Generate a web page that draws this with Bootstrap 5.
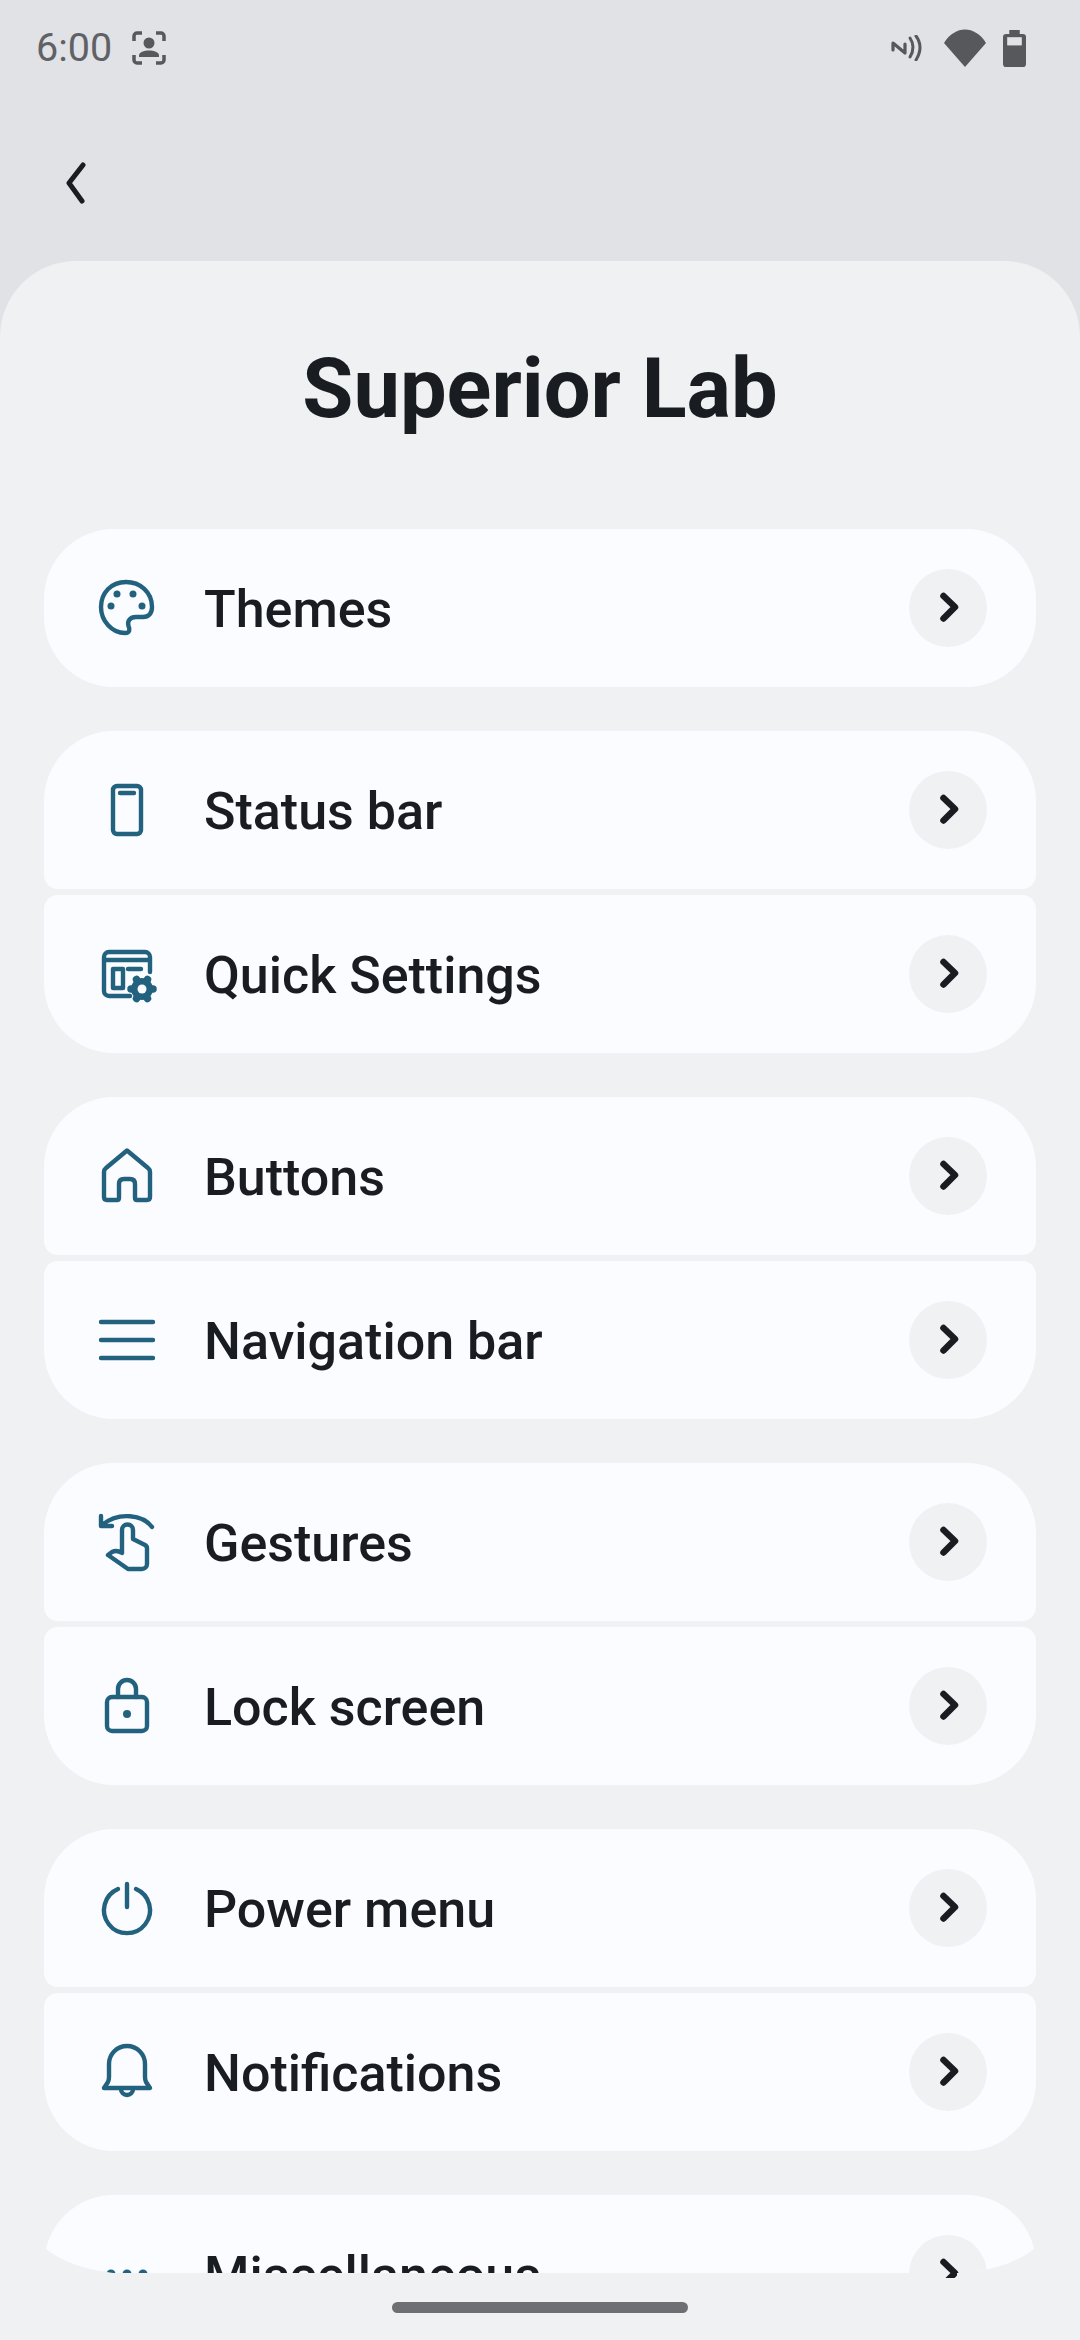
<!DOCTYPE html>
<html lang="en">
<head>
    <meta charset="UTF-8">
    <meta name="viewport" content="width=device-width, initial-scale=1">
    <title>Superior Lab</title>
    <link href="https://cdn.jsdelivr.net/npm/bootstrap@5.3.0/dist/css/bootstrap.min.css" rel="stylesheet">
    <style>
        body {
            width: 1080px;
            height: 2340px;
            overflow: hidden;
            background-color: #e0e2e6;
            font-family: Roboto, "Liberation Sans", sans-serif;
            color: #191c20;
        }
        .top-area { height: 261px; }
        .status-row { height: 96px; padding: 0 54px 0 36px; color: #57585b; }
        .status-time { font-size: 39.5px; line-height: 1; margin-right: 20px; color: #5f6165; }
        .status-icons { gap: 17px; }
        .back-row { padding: 66px 0 0 64px; }
        .sheet {
            height: 2079px;
            background-color: #f0f1f3;
            border-radius: 76px 76px 0 0;
        }
        .page-title {
            height: 268px;
            margin: 0;
            font-size: 83px;
            font-weight: 700;
            line-height: 256px;
            text-align: center;
            color: #191c20;
        }
        .group-list { margin: 0 44px; gap: 44px; }
        .row-group { gap: 6px; }
        .menu-row {
            height: 158px;
            padding: 0 49px 0 55px;
            background-color: #fbfcff;
            border-radius: 14px;
        }
        .row-group > .menu-row:first-child { border-top-left-radius: 70px; border-top-right-radius: 70px; }
        .row-group > .menu-row:last-child { border-bottom-left-radius: 70px; border-bottom-right-radius: 70px; }
        .row-icon { width: 56px; height: 56px; flex: none; overflow: visible; }
        .row-icon .ln { fill: none; stroke: #23627f; stroke-width: 4.4; stroke-linecap: round; stroke-linejoin: round; }
        .row-icon .tooth { fill: none; stroke: #23627f; stroke-width: 7.5; stroke-linecap: round; }
        .row-icon .fl { fill: #23627f; }
        .row-label { margin-left: 49px; padding-top: 3px; font-size: 52px; font-weight: 500; line-height: 1; }
        .go-btn {
            width: 78px;
            height: 78px;
            background-color: #f0f1f3;
            border-radius: 50%;
        }
        .cut-row {
            clip-path: path("M0 0H992V52Q970 72 923 78H913V83H893V78H69Q22 72 0 52Z");
        }
        .nav-handle {
            bottom: 27px;
            left: 392px;
            width: 296px;
            height: 11px;
            background-color: #6e6f73;
            border-radius: 6px;
        }
    </style>
</head>
<body class="position-relative">

<svg width="0" height="0" class="position-absolute">
    <symbol id="chev" viewBox="0 0 78 78">
        <path d="M34.500 27L46 38L34.500 49.500" fill="none" stroke="#191c20" stroke-width="6.500" stroke-linecap="round" stroke-linejoin="round"/>
    </symbol>
</svg>

<div class="top-area">
    <div class="status-row d-flex align-items-center justify-content-between">
        <div class="d-flex align-items-center">
            <span class="status-time">6:00</span>
            <svg width="34" height="34" viewBox="0 0 34 34" fill="none">
                <path d="M2 10V5a3 3 0 0 1 3-3H10M24 2H29a3 3 0 0 1 3 3V10M2 24V29a3 3 0 0 0 3 3H10M24 32H29a3 3 0 0 0 3-3V24" stroke="#57585b" stroke-width="3.500"/>
                <circle cx="17" cy="12" r="5.500" fill="#57585b"/>
                <path d="M7 26V24.500C7 21 12 19.500 17 19.500S27 21 27 24.500V26Z" fill="#57585b"/>
            </svg>
        </div>
        <div class="status-icons d-flex align-items-center">
            <svg class="me-1" width="32" height="26" viewBox="0 0 32 26" fill="none" stroke="#57585b" stroke-linecap="round">
                <path d="M2 15L2 8L14 18L14 9" stroke-width="3.200" stroke-linejoin="round"/>
                <path d="M19 3Q25 12 19 22" stroke-width="3"/>
                <path d="M25 1Q33 12 25 25" stroke-width="3"/>
            </svg>
            <svg width="42" height="38" viewBox="0 0 42 38">
                <path d="M0 14C11 -4 31 -4 42 14L21 38Z" fill="#57585b"/>
            </svg>
            <svg width="23" height="37" viewBox="0 0 22 36" preserveAspectRatio="none">
                <path d="M6 0H16V4H19a3 3 0 0 1 3 3V33a3 3 0 0 1-3 3H3a3 3 0 0 1-3-3V7a3 3 0 0 1 3-3H6Z" fill="#57585b"/>
                <rect x="4" y="7" width="14" height="8" fill="#e0e2e6"/>
            </svg>
        </div>
    </div>
    <div class="back-row">
        <svg width="24" height="42" viewBox="0 0 24 42">
            <path d="M19 3L5 21L18 39" fill="none" stroke="#191c20" stroke-width="5" stroke-linecap="round" stroke-linejoin="round"/>
        </svg>
    </div>
</div>

<div class="sheet overflow-hidden">
    <h1 class="page-title">Superior Lab</h1>
    <div class="group-list d-flex flex-column">

        <div class="row-group d-flex flex-column">
            <div class="menu-row d-flex align-items-center justify-content-between">
                <div class="d-flex align-items-center">
                    <svg class="row-icon" viewBox="0 0 56 56">
                        <path class="ln" d="M27 2C12 2 2 13 2 27C2 41 13 53 26 53C31 53 31 49 29.500 46C28 41 31 37 37 37H44C50 37 53 33 53 27C53 12 41 2 27 2Z"/>
                        <circle class="fl" cx="18" cy="14" r="3.500"/><circle class="fl" cx="34" cy="14" r="3.500"/>
                        <circle class="fl" cx="12" cy="26" r="3.500"/><circle class="fl" cx="43" cy="26" r="3.500"/>
                    </svg>
                    <span class="row-label">Themes</span>
                </div>
                <div class="go-btn"><svg width="78" height="78"><use href="#chev"/></svg></div>
            </div>
        </div>

        <div class="row-group d-flex flex-column">
            <div class="menu-row d-flex align-items-center justify-content-between">
                <div class="d-flex align-items-center">
                    <svg class="row-icon" viewBox="0 0 56 56">
                        <rect class="ln" x="14" y="4" width="28" height="48" rx="4"/>
                        <path class="ln" d="M21 11H35"/>
                    </svg>
                    <span class="row-label">Status bar</span>
                </div>
                <div class="go-btn"><svg width="78" height="78"><use href="#chev"/></svg></div>
            </div>
            <div class="menu-row d-flex align-items-center justify-content-between">
                <div class="d-flex align-items-center">
                    <svg class="row-icon" viewBox="0 0 56 56">
                        <path class="ln" d="M31 50H10a5 5 0 0 1-5-5V11a5 5 0 0 1 5-5H46a5 5 0 0 1 5 5V26M5 14H51M29 23H42"/>
                        <rect class="ln" x="14" y="23" width="10" height="19"/>
                        <path class="tooth" d="M32 43H54M37.500 33.500L48.500 52.500M37.500 52.500L48.500 33.500"/>
                        <circle class="fl" cx="43" cy="43" r="11"/>
                        <circle cx="43" cy="43" r="4.500" fill="#fbfcff"/>
                    </svg>
                    <span class="row-label">Quick Settings</span>
                </div>
                <div class="go-btn"><svg width="78" height="78"><use href="#chev"/></svg></div>
            </div>
        </div>

        <div class="row-group d-flex flex-column">
            <div class="menu-row d-flex align-items-center justify-content-between">
                <div class="d-flex align-items-center">
                    <svg class="row-icon" viewBox="0 0 56 56">
                        <path class="ln" d="M28 2.500L49 20Q51 21.500 51 24V49Q51 52 48 52H38Q36 52 36 50V36Q36 31 31 31H25Q20 31 20 36V50Q20 52 18 52H8Q5 52 5 49V24Q5 21.500 7 20Z"/>
                    </svg>
                    <span class="row-label">Buttons</span>
                </div>
                <div class="go-btn"><svg width="78" height="78"><use href="#chev"/></svg></div>
            </div>
            <div class="menu-row d-flex align-items-center justify-content-between">
                <div class="d-flex align-items-center">
                    <svg class="row-icon" viewBox="0 0 56 56">
                        <path class="ln" d="M2 10H54M2 28H54M2 46H54"/>
                    </svg>
                    <span class="row-label">Navigation bar</span>
                </div>
                <div class="go-btn"><svg width="78" height="78"><use href="#chev"/></svg></div>
            </div>
        </div>

        <div class="row-group d-flex flex-column">
            <div class="menu-row d-flex align-items-center justify-content-between">
                <div class="d-flex align-items-center">
                    <svg class="row-icon" viewBox="0 0 56 56">
                        <path class="ln" d="M53 13C44 1 20 -3 3 11M2 2V12H13"/>
                        <path class="ln" d="M23 38V16a5.500 5.500 0 0 1 11 0V25L46 31a4 4 0 0 1 2 4V50a5 5 0 0 1-5 5H29L9 41L13 38C17 36 20 37 23 39Z"/>
                    </svg>
                    <span class="row-label">Gestures</span>
                </div>
                <div class="go-btn"><svg width="78" height="78"><use href="#chev"/></svg></div>
            </div>
            <div class="menu-row d-flex align-items-center justify-content-between">
                <div class="d-flex align-items-center">
                    <svg class="row-icon" viewBox="0 0 56 56">
                        <rect class="ln" x="8" y="19" width="40" height="34" rx="5"/>
                        <path class="ln" d="M19 19V11a9 9 0 0 1 18 0V19"/>
                        <circle class="fl" cx="28" cy="36" r="4"/>
                    </svg>
                    <span class="row-label">Lock screen</span>
                </div>
                <div class="go-btn"><svg width="78" height="78"><use href="#chev"/></svg></div>
            </div>
        </div>

        <div class="row-group d-flex flex-column">
            <div class="menu-row d-flex align-items-center justify-content-between">
                <div class="d-flex align-items-center">
                    <svg class="row-icon" viewBox="0 0 56 56">
                        <path class="ln" d="M19 9A23 23 0 1 0 37 9M28 4V27"/>
                    </svg>
                    <span class="row-label">Power menu</span>
                </div>
                <div class="go-btn"><svg width="78" height="78"><use href="#chev"/></svg></div>
            </div>
            <div class="menu-row d-flex align-items-center justify-content-between">
                <div class="d-flex align-items-center">
                    <svg class="row-icon" viewBox="0 0 56 56">
                        <path class="ln" d="M5 44L9 38Q10 36 10 33V20A18 18 0 0 1 46 20V33Q46 36 47 38L51 44Z"/>
                        <path class="ln" d="M22 45a6 6 0 0 0 12 0"/>
                    </svg>
                    <span class="row-label">Notifications</span>
                </div>
                <div class="go-btn"><svg width="78" height="78"><use href="#chev"/></svg></div>
            </div>
        </div>

        <div class="row-group d-flex flex-column">
            <div class="menu-row cut-row d-flex align-items-center justify-content-between">
                <div class="d-flex align-items-center">
                    <svg class="row-icon" viewBox="0 0 56 56">
                        <circle class="fl" cx="12" cy="28" r="4.500"/><circle class="fl" cx="28" cy="28" r="4.500"/><circle class="fl" cx="44" cy="28" r="4.500"/>
                    </svg>
                    <span class="row-label">Miscellaneous</span>
                </div>
                <div class="go-btn"><svg width="78" height="78"><use href="#chev"/></svg></div>
            </div>
        </div>

    </div>
</div>

<div class="nav-handle position-absolute"></div>

<script src="https://cdn.jsdelivr.net/npm/bootstrap@5.3.0/dist/js/bootstrap.bundle.min.js"></script>
</body>
</html>
